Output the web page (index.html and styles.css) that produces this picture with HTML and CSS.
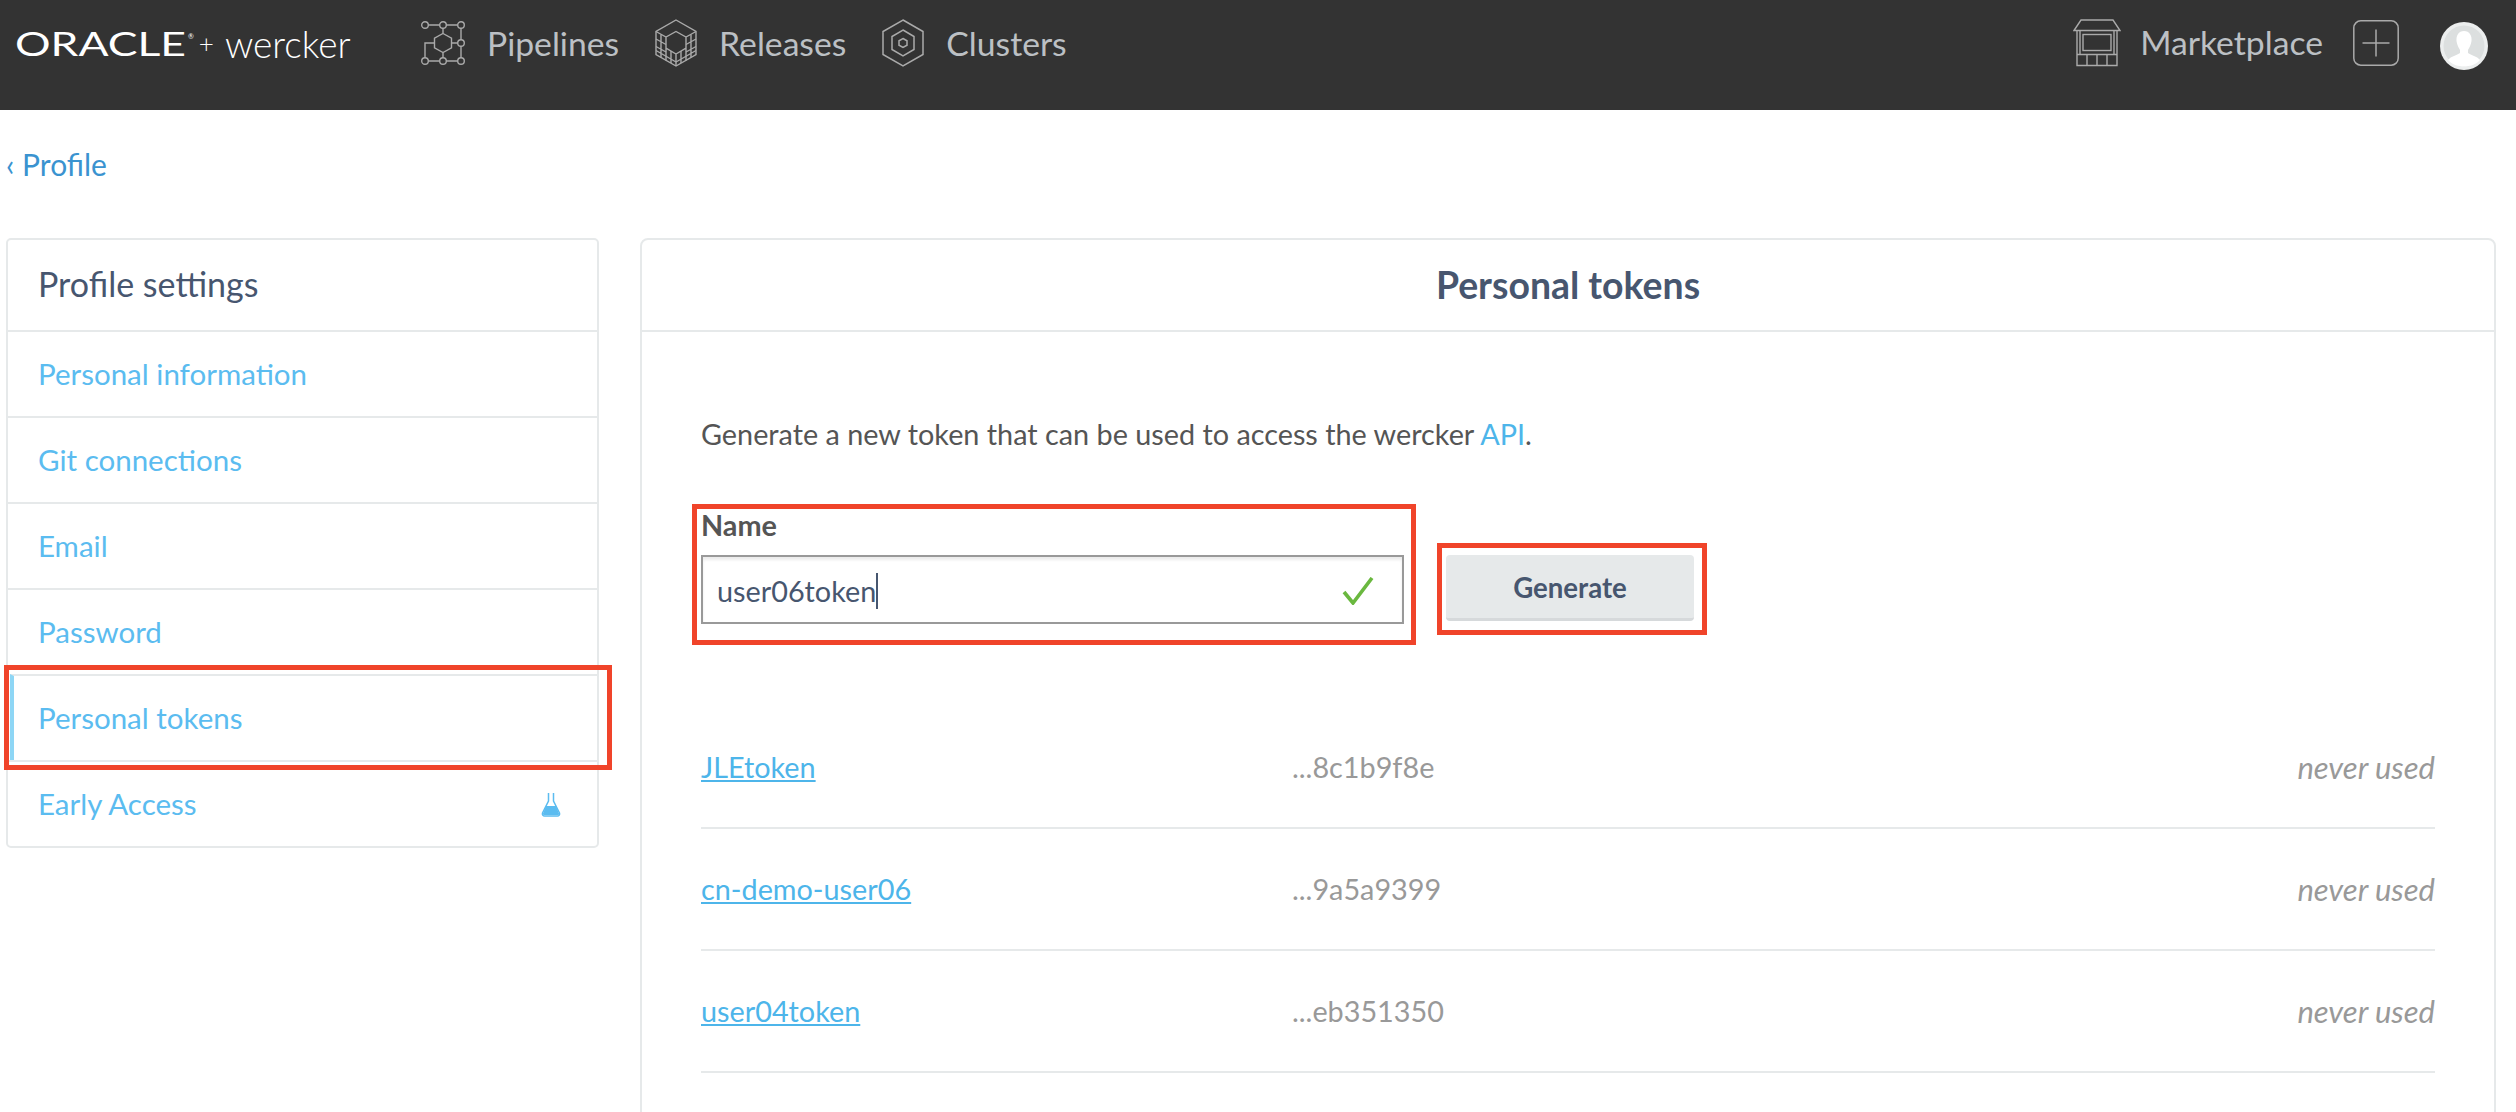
FILE: index.html
```html
<!DOCTYPE html>
<html lang="en">
<head>
  <meta charset="UTF-8">
  <title>Personal tokens</title>
  <link rel="stylesheet" href="styles.css">
</head>
<body>

  <header class="topbar">
    <div class="logo">
      <span class="logo-oracle">ORACLE</span>
      <span class="logo-reg">®</span>
      <span class="logo-plus">+</span>
      <span class="logo-wercker">wercker</span>
    </div>

    <nav class="mainnav">
      <a class="nav-item nav-pipelines" href="#">
        <svg class="nav-icon" width="44" height="44" viewBox="0 0 44 44" fill="none" stroke="#aaa" stroke-width="1.4">
          <circle cx="4" cy="4" r="3.3"/><circle cx="22" cy="4" r="3.3"/><circle cx="40" cy="4" r="3.3"/>
          <circle cx="40" cy="22" r="3.3"/><circle cx="40" cy="40" r="3.3"/><circle cx="22" cy="40" r="3.3"/><circle cx="4" cy="40" r="3.3"/>
          <path d="M7.3 4H18.7M25.3 4H36.7M40 7.3V18.7M40 25.3V36.7M36.7 40H25.3M18.7 40H7.3"/>
          <path d="M22 12.5L30.5 17.2V26.8L22 31.5L13.5 26.8V17.2Z"/>
          <path d="M13.5 22H4V36.7M30.5 22H36.7M22 7.3V12.5M22 31.5V36.7"/>
        </svg>
        Pipelines
      </a>
      <a class="nav-item nav-releases" href="#">
        <svg class="nav-icon" width="42" height="48" viewBox="0 0 42 48" fill="none" stroke="#aaa" stroke-width="1.4">
          <path d="M21 1L41 12.5V35.5L21 47L1 35.5V12.5Z"/>
          <path d="M1 12.5L11 18L21 12.5L31 18L41 12.5M11 18V41.5M31 18V41.5M21 35V47M11 18V29L21 35L31 29V18"/>
          <path d="M6 15.5V38.5M36 15.5V38.5M16 32V44M26 32V44M1 20L11 25.5M1 27.5L11 33M1 31.5L21 43M41 20L31 25.5M41 27.5L31 33M41 31.5L21 43"/>
        </svg>
        Releases
      </a>
      <a class="nav-item nav-clusters" href="#">
        <svg class="nav-icon" width="42" height="48" viewBox="0 0 42 48" fill="none" stroke="#aaa" stroke-width="1.5">
          <path d="M21 1L41 12.5V35.5L21 47L1 35.5V12.5Z"/>
          <path d="M21 11L32 17.5V30.5L21 37L10 30.5V17.5Z"/>
          <path d="M21 19.5L25 21.8V26.2L21 28.5L17 26.2V21.8Z"/>
        </svg>
        Clusters
      </a>
    </nav>

    <div class="usernav">
      <a class="nav-item nav-market" href="#">
        <svg class="nav-icon" width="48" height="48" viewBox="0 0 48 48" fill="none" stroke="#aaa" stroke-width="1.4">
          <path d="M1 11.5L8 1H40L47 11.5Z"/>
          <path d="M4 11.5V46.5H44V11.5M7 11.5V35M41 11.5V35"/>
          <rect x="10" y="15.5" width="28" height="16"/>
          <path d="M4 35.5H44M24 35.5V46.5M14 35.5V46.5M34 35.5V46.5"/>
        </svg>
        <span class="market-label">Marketplace</span>
      </a>
      <a class="add-btn" href="#">
        <svg width="46" height="46" viewBox="0 0 46 46" fill="none" stroke="#aaa" stroke-width="1.5">
          <rect x="0.8" y="0.8" width="44.4" height="44.4" rx="7"/>
          <path d="M23 9.5V36.5M9.5 23H36.5"/>
        </svg>
      </a>
      <svg class="avatar" width="48" height="48" viewBox="0 0 48 48">
        <circle cx="24" cy="24" r="24" fill="#eceeee"/>
        <circle cx="24" cy="24" r="20.5" fill="#dcdfdf"/>
        <path d="M24 9C18.5 9 16 13.5 16.5 19C17 23 18.8 26 20 28V31C17 33.5 11 34 8 38C12 42.5 18 44.5 24 44.5C30 44.5 36 42.5 40 38C37 34 31 33.5 28 31V28C29.2 26 31 23 31.5 19C32 13.5 29.5 9 24 9Z" fill="#fff"/>
      </svg>
    </div>
  </header>

  <div class="page">
    <a class="back-link" href="#">‹ Profile</a>

    <div class="columns">
      <aside class="sidebar">
        <div class="sidebar-title">Profile settings</div>
        <a class="side-link" href="#">Personal information</a>
        <a class="side-link" href="#">Git connections</a>
        <a class="side-link" href="#">Email</a>
        <a class="side-link" href="#">Password</a>
        <a class="side-link active" href="#">Personal tokens</a>
        <a class="side-link" href="#">Early Access
          <svg class="flask" width="20" height="25" viewBox="0 0 20 25" fill="none" stroke="#5bbcf0" stroke-width="1.5">
            <path d="M7.5 1V9L1.5 21C1 22.5 2 24 3.5 24H16.5C18 24 19 22.5 18.5 21L12.5 9V1"/>
            <path d="M5 14H15L18 21.5C18.3 22.5 17.5 23 16.5 23H3.5C2.5 23 1.7 22.5 2 21.5Z" fill="#5bbcf0" stroke="none"/>
          </svg>
        </a>
      </aside>

      <main class="panel">
        <h2 class="panel-title">Personal tokens</h2>
        <div class="panel-body">
          <p class="intro">Generate a new token that can be used to access the wercker <a href="#">API</a>.</p>

          <form class="token-form">
            <div class="field">
              <label class="field-label">Name</label>
              <div class="field-input">
                <span>user06token</span><span class="caret"></span>
                <svg class="check" width="32" height="28" viewBox="0 0 32 28" fill="none" stroke="#6ab83f" stroke-width="3.6">
                  <path d="M2 15L11 26L30 1"/>
                </svg>
              </div>
            </div>
            <button class="generate" type="button">Generate</button>
          </form>

          <ul class="token-list">
            <li class="token-row">
              <a class="token-name" href="#">JLEtoken</a>
              <span class="token-hash">...8c1b9f8e</span>
              <em class="token-used">never used</em>
            </li>
            <li class="token-row">
              <a class="token-name" href="#">cn-demo-user06</a>
              <span class="token-hash">...9a5a9399</span>
              <em class="token-used">never used</em>
            </li>
            <li class="token-row">
              <a class="token-name" href="#">user04token</a>
              <span class="token-hash">...eb351350</span>
              <em class="token-used">never used</em>
            </li>
          </ul>
        </div>
      </main>
    </div>
  </div>

  <!-- red annotation boxes drawn over the screenshot -->
  <div class="mark mark-side"></div>
  <div class="mark mark-name"></div>
  <div class="mark mark-generate"></div>

</body>
</html>
```

FILE: styles.css
```css
* {
  box-sizing: border-box;
}

html, body {
  height: 1112px;
  overflow: hidden;
}

body {
  margin: 0;
  position: relative;
  background: #fff;
  font-family: Lato, "Open Sans", sans-serif;
  font-size: 28.8px;
  color: #555;
}

a {
  text-decoration: none;
}

/* top bar */
.topbar {
  display: flex;
  align-items: center;
  height: 110px;
  padding: 0 28px 24px 15px;
  background: #333;
}

.logo {
  display: flex;
  align-items: center;
  width: 406px;
  color: #fff;
}

.logo-oracle {
  display: inline-block;
  width: 171px;
  font-size: 32px;
  font-weight: 400;
  transform: scaleX(1.39);
  transform-origin: left center;
}

.logo-reg {
  font-size: 7px;
  margin: -14px 0 0 2px;
}

.logo-plus {
  margin-left: 5px;
  font-size: 26px;
  font-weight: 300;
}

.logo-wercker {
  margin-left: 11px;
  font-size: 37px;
  font-weight: 300;
}

.mainnav, .usernav {
  display: flex;
  align-items: center;
}

.usernav {
  margin-left: auto;
}

.nav-item {
  display: flex;
  align-items: center;
  gap: 22px;
  font-size: 33.7px;
  color: #bcc0c4;
}

.nav-pipelines {
  margin-right: 36px;
}

.nav-releases {
  margin-right: 36px;
}

.nav-market {
  gap: 19px;
}

.market-label {
  margin-top: -2px;
}

.add-btn {
  display: block;
  height: 46px;
  margin-left: 30px;
}

.avatar {
  margin-left: 41px;
  margin-top: 6px;
}

/* page */
.page {
  padding: 0 20px 0 6px;
}

.back-link {
  display: block;
  height: 128px;
  padding-top: 37px;
  line-height: 34px;
  font-size: 30px;
  color: #3a93d0;
}

.columns {
  display: flex;
  align-items: flex-start;
  gap: 41px;
}

/* sidebar */
.sidebar {
  flex: none;
  width: 593px;
  border: 2px solid #e6e9ea;
  border-radius: 5px;
}

.sidebar-title {
  height: 90px;
  padding-left: 30px;
  line-height: 88px;
  font-size: 34px;
  color: #47566f;
}

.side-link {
  display: flex;
  align-items: center;
  justify-content: space-between;
  height: 86px;
  padding: 0 36px 0 30px;
  border-top: 2px solid #e6e9ea;
  font-size: 29.5px;
  line-height: 34px;
  color: #5bbcf0;
}

.side-link.active {
  border-left: 4px solid #8ed6f5;
  margin-left: 2px;
  padding-left: 24px;
}

/* main panel */
.panel {
  flex: 1;
  height: 1000px;
  border: 2px solid #e6e9ea;
  border-radius: 8px;
}

.panel-title {
  height: 92px;
  margin: 0;
  border-bottom: 2px solid #e6e9ea;
  text-align: center;
  line-height: 90px;
  font-size: 37.4px;
  font-weight: 700;
  color: #47566f;
}

.panel-body {
  padding: 0 59px;
}

.intro {
  margin: 0;
  padding-top: 84px;
  line-height: 36px;
}

.intro a {
  color: #4db5ea;
}

.token-form {
  display: flex;
  align-items: flex-start;
  gap: 42px;
  margin-top: 55px;
}

.field {
  width: 703px;
}

.field-label {
  display: block;
  height: 48px;
  line-height: 36px;
  font-weight: 700;
  color: #555;
}

.field-input {
  display: flex;
  align-items: center;
  height: 69px;
  padding: 2px 28px 0 14px;
  border: 2px solid #999;
  box-shadow: inset 0 3px 3px rgba(0,0,0,0.08);
  color: #47566f;
}

.caret {
  width: 2px;
  height: 36px;
  background: #47566f;
}

.check {
  margin-left: auto;
}

.generate {
  width: 248px;
  height: 66px;
  margin-top: 48px;
  padding: 2px 0 0;
  border: none;
  border-bottom: 3px solid #d6d9db;
  border-radius: 4px;
  background: #e6e9ea;
  font-family: inherit;
  font-size: 27.6px;
  font-weight: 700;
  color: #47566f;
}

.token-list {
  margin: 83px 0 0;
  padding: 0;
  list-style: none;
}

.token-row {
  display: flex;
  align-items: center;
  height: 122px;
  border-bottom: 2px solid #e6e9ea;
}

.token-name {
  width: 591px;
  color: #4db5ea;
  text-decoration: underline;
}

.token-hash {
  color: #999;
}

.token-used {
  margin-left: auto;
  font-size: 31px;
  color: #999;
}

/* annotations */
.mark {
  position: absolute;
  border: 5px solid #f0442a;
}

.mark-side {
  left: 4px;
  top: 665px;
  width: 608px;
  height: 105px;
}

.mark-name {
  left: 692px;
  top: 504px;
  width: 724px;
  height: 141px;
}

.mark-generate {
  left: 1437px;
  top: 543px;
  width: 270px;
  height: 92px;
}
```
